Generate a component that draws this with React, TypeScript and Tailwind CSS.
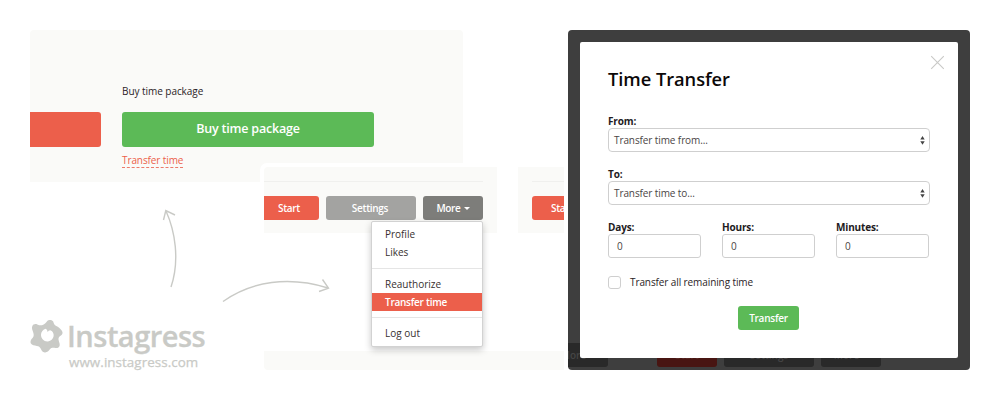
import type { ReactNode } from "react";

function Button({ className, children }: { className: string; children?: ReactNode }) {
  return (
    <button className={`flex shrink-0 items-center justify-center rounded-[3px] font-semibold whitespace-nowrap ${className}`}>
      {children}
    </button>
  );
}

function Caret({ className }: { className: string }) {
  return <span className={`mt-[1px] border-x-[3px] border-t-[3px] border-x-transparent ${className}`} />;
}

function PackagePanel() {
  return (
    <section className="absolute top-[30px] left-[30px] flex h-[152px] w-[433px] gap-[21px] rounded-t-[4px] bg-[#fafaf8] pt-[53px]">
      <Button className="mt-[29px] h-[35px] w-[71px] rounded-l-none bg-[#ec5f4b]" />
      <div className="flex w-[252px] flex-col items-start">
        <p className="h-[29px] text-[10px] leading-[16px] tracking-[-0.05px] text-[#2b2326]">Buy time package</p>
        <Button className="h-[35px] w-full bg-[#5cba57] text-[12.5px] tracking-[-0.2px] text-white">Buy time package</Button>
        <a className="mt-[5px] h-[16px] border-b border-dashed border-[#ec7a69] text-[10px] leading-[17px] tracking-[-0.1px] text-[#ec5f4b]">Transfer time</a>
      </div>
    </section>
  );
}

function MenuItem({ active, children }: { active?: boolean; children: ReactNode }) {
  return (
    <li className={`flex h-[18px] items-center pl-[13px] ${active ? "bg-[#ec5f4b] font-semibold tracking-[-0.25px] text-white" : "text-[#37302f]"}`}>
      {children}
    </li>
  );
}

function ActionsPanel() {
  return (
    <section className="absolute top-[163px] left-[260px] flex h-[207px] w-[304px] flex-col justify-between rounded-tl-[7px] bg-white pt-[4px] pl-[4px] text-[10px]">
      <div className="flex h-[66px] gap-[21px] overflow-hidden rounded-tl-[4px]">
        <div className="w-[233px] shrink-0 bg-[#fafaf8] pt-[14px] pr-[14px]">
          <div className="h-px bg-[#f0f0ee]" />
          <div className="mt-[14px] flex gap-[7px] tracking-[-0.3px] text-white">
            <Button className="h-[24px] w-[55px] rounded-l-none bg-[#ec5f4b] pr-[5px]">Start</Button>
            <Button className="h-[24px] w-[90px] bg-[#a3a3a1] pr-[2px]">Settings</Button>
            <Button className="h-[24px] w-[60px] gap-[3px] bg-[#7d7d7a]">
              More
              <Caret className="border-t-white" />
            </Button>
          </div>
        </div>
        <div className="w-[46px] shrink-0 overflow-hidden bg-[#fafaf8] pt-[14px] pl-[14px]">
          <div className="h-px bg-[#f0f0ee]" />
          <Button className="mt-[14px] h-[24px] w-[60px] bg-[#ec5f4b] tracking-[-0.3px] text-white">Start</Button>
        </div>
      </div>
      <div className="h-[19px] rounded-bl-[4px] bg-[#fafaf8]" />
      <ul className="absolute top-[58px] left-[111px] h-[126px] w-[112px] rounded-[2px] border border-[#d2d2d2] bg-white pt-[3px] leading-[18px] shadow-[0_3px_7px_rgba(0,0,0,0.22)]">
        <MenuItem>Profile</MenuItem>
        <MenuItem>Likes</MenuItem>
        <li className="mt-[7px] mb-[6px] h-px bg-[#e5e5e5]" />
        <MenuItem>Reauthorize</MenuItem>
        <MenuItem active>Transfer time</MenuItem>
        <li className="my-[6px] h-px bg-[#e5e5e5]" />
        <MenuItem>Log out</MenuItem>
      </ul>
    </section>
  );
}

function SelectField({ label, value }: { label: string; value: string }) {
  return (
    <div className="flex h-[53px] flex-col">
      <label className="h-[14px] font-bold tracking-[-0.15px] text-[#231b1e]">{label}</label>
      <div className="flex h-[24px] items-center justify-between rounded-[4px] border border-[#cfcfcf] pr-[4px] pl-[5px] tracking-[-0.1px] text-[#4a4545]">
        <span>{value}</span>
        <svg width="5" height="9" viewBox="0 0 5 9" fill="#444">
          <path d="M2.5 0 4.7 3.6H.3ZM.3 5.2h4.4L2.5 8.8Z" />
        </svg>
      </div>
    </div>
  );
}

function NumberField({ label }: { label: string }) {
  return (
    <div className="flex w-[93px] flex-col">
      <label className="h-[14px] font-bold tracking-[-0.15px] text-[#231b1e]">{label}</label>
      <div className="flex h-[24px] items-center rounded-[3px] border border-[#cfcfcf] pl-[8px] text-[#4a4545]">0</div>
    </div>
  );
}

function TransferDialog() {
  return (
    <section className="absolute top-[30px] left-[568px] flex h-[340px] w-[402px] flex-col justify-end overflow-hidden rounded-[4px] bg-[#3e3e3e] pb-[3px] text-[10px]">
      <div className="flex h-[24px] text-[#454545]">
        <Button className="-ml-[20px] w-[60px] gap-[3px] bg-[#292929]">
          More
          <Caret className="border-t-[#454545]" />
        </Button>
        <Button className="ml-[49px] w-[60px] bg-[#481512] text-[#5a2a27]">Start</Button>
        <Button className="ml-[7px] w-[90px] bg-[#292929]">Settings</Button>
        <Button className="ml-[7px] w-[60px] gap-[3px] bg-[#292929]">
          More
          <Caret className="border-t-[#454545]" />
        </Button>
      </div>
      <div className="absolute top-[12px] left-[12px] flex h-[315.5px] w-[378px] flex-col rounded-[2px] bg-white pt-[23px] pr-[28px] pl-[28px] leading-[15px]">
        <h1 className="h-[49px] text-[18.3px] leading-[28px] font-semibold tracking-[-0.05px] text-[#0c0808]">Time Transfer</h1>
        <svg className="absolute top-[13px] right-[13px]" width="15" height="15" viewBox="0 0 15 15" stroke="#c9c9c7" strokeWidth="1.1">
          <path d="M1.2 1.2 13.8 13.8M13.8 1.2 1.2 13.8" />
        </svg>
        <SelectField label="From:" value="Transfer time from..." />
        <SelectField label="To:" value="Transfer time to..." />
        <div className="flex justify-between pr-px">
          <NumberField label="Days:" />
          <NumberField label="Hours:" />
          <NumberField label="Minutes:" />
        </div>
        <label className="mt-[17px] flex items-center gap-[9px] tracking-[-0.1px] text-[#2b2326]">
          <span className="h-[13px] w-[13px] rounded-[3px] border border-[#cfcfcf]" />
          Transfer all remaining time
        </label>
        <Button className="mt-[16px] mr-px h-[24px] w-[61px] self-center bg-[#5cba57] tracking-[-0.25px] text-white">Transfer</Button>
      </div>
    </section>
  );
}

function Brand() {
  return (
    <div className="absolute top-[318px] left-[30px] w-[190px] text-[#c9cac6]">
      <div className="flex h-[36px] items-center gap-[4px]">
        <svg width="33" height="34" viewBox="0 0 33 34" fill="currentColor" fillRule="evenodd">
          <path d="M12 6.200C14.500 5.600 16 3.800 17.300 2C18.600.3 22.500.6 23.200 2.600C23.900 4.800 24.300 6.200 26.300 6.900C28.300 7.600 30 9.400 31.700 11.400C33.200 13.300 32.600 15.300 30.900 16.400C29 17.600 28.200 18.800 28.600 21C29 23 30 24.700 29.600 26.700C29.200 28.600 27.300 29.200 25.300 28.900C22.800 28.500 21.200 28.700 19.900 30.300C18.500 32 17.200 33.600 14.800 33.400C12.500 33.200 11.500 31.600 10.800 29.800C10 27.800 8.800 27.200 6.800 26.900C4.500 26.500 1.900 26.500 .9 24.600C0 22.700 .8 20.800 2.300 19.300C3.700 17.900 3.900 16.500 3.500 14.500C3 12 1.300 9.800 2.200 7.400C3 5.200 5.200 4.700 7.300 5.400C9 6 10.300 6.600 12 6.200ZM15.800 9.800C13 10.500 10.900 13 11 16C11.100 19.700 14 22.600 17.600 22.400C21.300 22.200 24 19 23.600 15.600C23.400 13.400 22.300 11.700 20.600 11.400C19.200 11.200 18.200 12.200 17.700 13.300C17.500 11.800 17 10.500 15.800 9.800Z" />
        </svg>
        <span className="pb-px text-[29px] leading-[34px] font-semibold tracking-[-0.5px] [-webkit-text-stroke:0.3px_#c9cac6]">Instagress</span>
      </div>
      <p className="pl-[39px] text-[13.4px] leading-[17px] tracking-[0.06px] [-webkit-text-stroke:0.25px_#c9cac6]">www.instagress.com</p>
    </div>
  );
}

function Arrows() {
  return (
    <svg className="absolute top-[200px] left-[160px]" width="180" height="110" viewBox="160 200 180 110" fill="none" stroke="#c9cac6" strokeWidth="1.4">
      <path d="M171 287C180 260 175 231 166 211M163.500 220l2.300-9.500L175 215" />
      <path d="M223 301.500C252 281 289 276 328 288M322.500 279.500l6 8.700-9.500 3.300" />
    </svg>
  );
}

export default function App() {
  return (
    <main className="relative h-[400px] w-[1000px] overflow-hidden bg-white font-['Open_Sans',sans-serif]">
      <PackagePanel />
      <ActionsPanel />
      <Arrows />
      <TransferDialog />
      <Brand />
    </main>
  );
}
